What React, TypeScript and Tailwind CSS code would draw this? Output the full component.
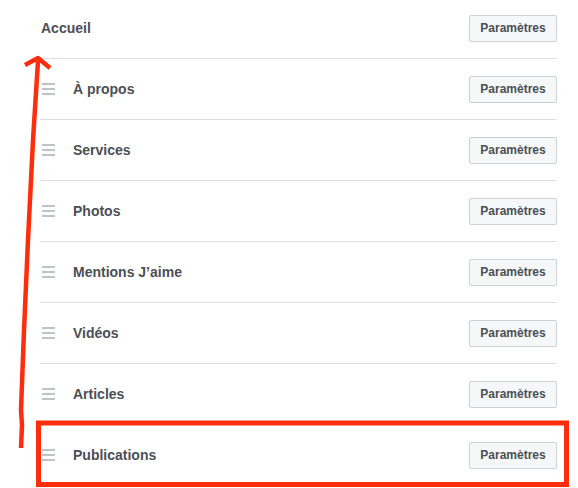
import React from "react";

const items = ["À propos", "Services", "Photos", "Mentions J’aime", "Vidéos", "Articles", "Publications"];

function Btn() {
  return (
    <button className="h-[27px] w-[88px] rounded-[2px] border border-[#ced0d4] bg-[#f6f7f9] text-[12px] font-bold text-[#4b4f56] leading-none">
      Paramètres
    </button>
  );
}

function Grip() {
  return (
    <div className="flex w-[13px] flex-col gap-[3px]">
      <div className="h-[2px] bg-[#bec2c9]" />
      <div className="h-[2px] bg-[#bec2c9]" />
      <div className="h-[2px] bg-[#bec2c9]" />
    </div>
  );
}

export default function App() {
  return (
    <div
      className="relative h-[488px] w-[578px] overflow-hidden bg-white"
      style={{ fontFamily: '"Liberation Sans", Arial, sans-serif' }}
    >
      <div className="ml-[40px] w-[517px]">
        <div className="flex h-[59px] items-center justify-between border-b border-[#dddfe2] pb-[2px]">
          <span className="pl-px text-[14px] font-bold text-[#4b4f56]">Accueil</span>
          <Btn />
        </div>
        {items.map((t) => (
          <div key={t} className="flex h-[61px] items-center justify-between border-b border-[#dddfe2]">
            <div className="flex items-center">
              <div className="ml-[2px]">
                <Grip />
              </div>
              <span className="ml-[18px] text-[14px] font-bold text-[#4b4f56]">{t}</span>
            </div>
            <Btn />
          </div>
        ))}
      </div>
      <svg className="pointer-events-none absolute left-0 top-0" width="578" height="488">
        <path d="M21 448 L22 425 L21 410 L24 330 L28 240 L33 140 L38 61" fill="none" stroke="#ff2d0b" strokeWidth="4.5" strokeLinecap="butt" />
        <path d="M25 65 L38 58 L50 68" fill="none" stroke="#ff2d0b" strokeWidth="4.5" strokeLinejoin="round" />
        <rect x="38.5" y="423" width="528" height="61.5" fill="none" stroke="#ff2d0b" strokeWidth="5" />
      </svg>
    </div>
  );
}
